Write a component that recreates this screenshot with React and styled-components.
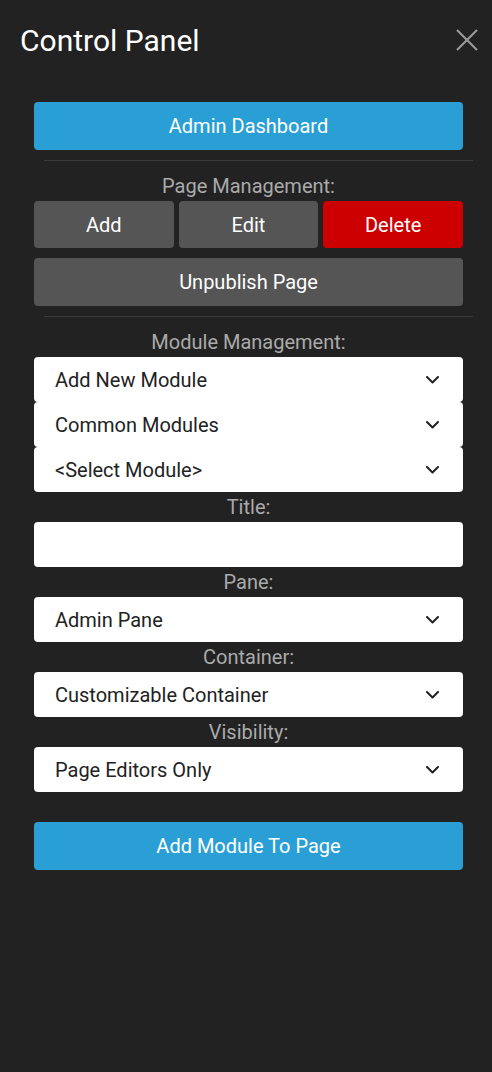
import styled, { createGlobalStyle } from 'styled-components';

const GlobalStyle = createGlobalStyle`
  html, body {
    margin: 0;
    padding: 0;
    background: #222222;
  }
  body {
    font-family: Roboto, "Liberation Sans", sans-serif;
  }
`;

const Chevron = () => (
  <svg width="13" height="8" viewBox="0 0 13 8" fill="none">
    <polyline points="1,1 6.5,6.5 12,1" stroke="#222" strokeWidth="2" strokeLinecap="round" strokeLinejoin="round" />
  </svg>
);

const CloseIcon = () => (
  <svg width="22" height="22" viewBox="0 0 22 22">
    <line x1="1" y1="1" x2="21" y2="21" stroke="#9a9a9a" strokeWidth="2.2" />
    <line x1="21" y1="1" x2="1" y2="21" stroke="#9a9a9a" strokeWidth="2.2" />
  </svg>
);

const SelectBox = ({ value }) => (
  <Select>
    <span>{value}</span>
    <Chevron />
  </Select>
);

const App = () => {
  return (
    <>
      <GlobalStyle />
      <Panel>
        <Header>
          <h1>Control Panel</h1>
          <CloseButton aria-label="Close">
            <CloseIcon />
          </CloseButton>
        </Header>

        <Content>
          <Button>Admin Dashboard</Button>
          <Divider />

          <Label>Page Management:</Label>
          <ButtonRow>
            <Button variant="dark">Add</Button>
            <Button variant="dark">Edit</Button>
            <Button variant="danger">Delete</Button>
          </ButtonRow>
          <Button variant="dark" style={{ marginTop: '10px' }}>
            Unpublish Page
          </Button>
          <Divider />

          <Label>Module Management:</Label>
          <SelectBox value="Add New Module" />
          <SelectBox value="Common Modules" />
          <SelectBox value="<Select Module>" />

          <Label>Title:</Label>
          <Input type="text" />

          <Label>Pane:</Label>
          <SelectBox value="Admin Pane" />

          <Label>Container:</Label>
          <SelectBox value="Customizable Container" />

          <Label>Visibility:</Label>
          <SelectBox value="Page Editors Only" />

          <Button style={{ marginTop: '30px' }}>Add Module To Page</Button>
        </Content>
      </Panel>
    </>
  );
};

const Panel = styled.div`
  width: 492px;
  min-height: 1072px;
  background: #222222;
  box-sizing: border-box;
`;

const Header = styled.header`
  display: flex;
  justify-content: space-between;
  align-items: center;
  height: 80px;
  padding: 0 14px 0 20px;

  h1 {
    margin: 0;
    font-size: 30px;
    font-weight: 400;
    color: #ffffff;
  }
`;

const CloseButton = styled.button`
  display: flex;
  background: none;
  border: none;
  padding: 0;
  margin-top: -1px;
  cursor: pointer;
`;

const Content = styled.div`
  display: flex;
  flex-direction: column;
  padding: 22px 29px 0 34px;
`;

const Button = styled.button`
  height: 48px;
  width: 100%;
  border: none;
  border-radius: 4px;
  font-family: Roboto, "Liberation Sans", sans-serif;
  font-size: 20px;
  color: #ffffff;
  cursor: pointer;
  background: ${({ variant }) =>
    variant === 'dark' ? '#555555' : variant === 'danger' ? '#cc0000' : '#2a9fd6'};
`;

const ButtonRow = styled.div`
  display: grid;
  grid-template-columns: 1fr 1fr 1fr;
  gap: 5px;

  button {
    height: 47px;
  }
`;

const Divider = styled.hr`
  border: none;
  border-top: 1px solid #3a3a3a;
  margin: 10px -10px 10px 10px;
`;

const Label = styled.div`
  text-align: center;
  font-size: 20px;
  line-height: 30px;
  color: #aaaaaa;
`;

const Select = styled.div`
  display: flex;
  justify-content: space-between;
  align-items: center;
  height: 45px;
  padding: 0 24px 0 21px;
  background: #ffffff;
  border-radius: 4px;
  font-size: 20px;
  color: #222222;
`;

const Input = styled.input`
  height: 45px;
  box-sizing: border-box;
  border: none;
  border-radius: 4px;
  background: #ffffff;
  padding: 0 21px;
  font-size: 20px;
  outline: none;
`;

export default App;
